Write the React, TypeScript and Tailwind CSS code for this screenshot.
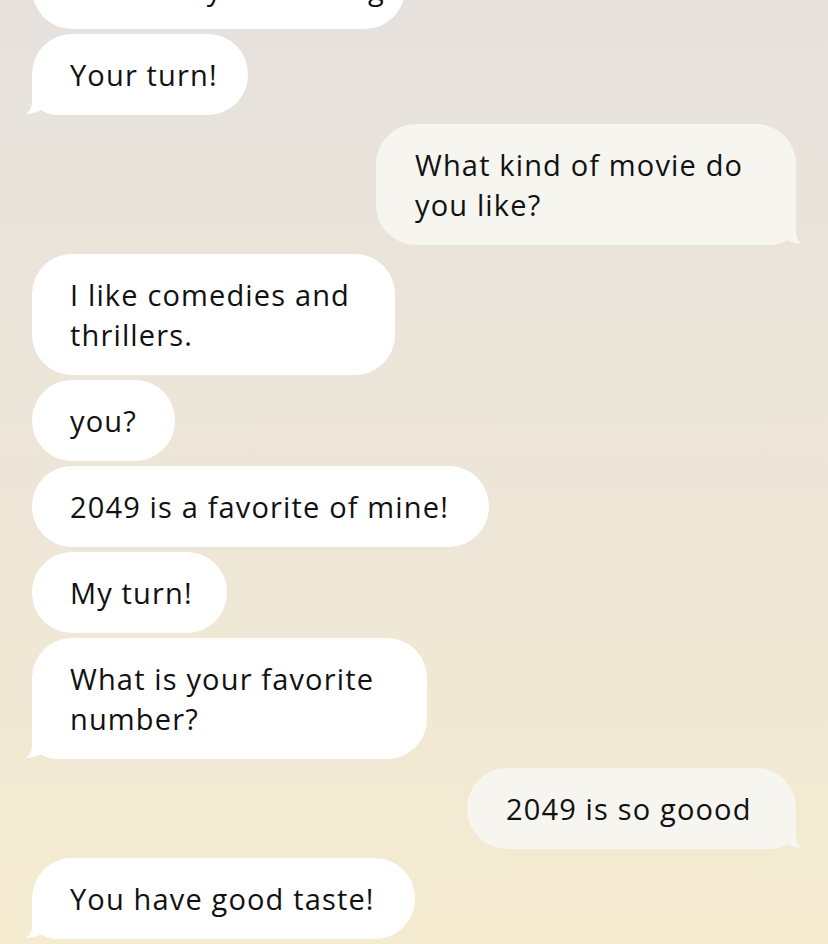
import React from "react";

type Msg = {
  side: "left" | "right";
  lines: string[];
  w: string;
  tail?: boolean;
  gap: string;
};

function Tail({ side, color }: { side: "left" | "right"; color: string }) {
  return (
    <svg
      viewBox="-6 -30 32 30"
      className={
        side === "left"
          ? "absolute bottom-0 left-[-6px] h-[30px] w-[32px]"
          : "absolute bottom-0 right-[-6px] h-[30px] w-[32px] -scale-x-100"
      }
    >
      <path
        d="M0 -30 L0 -14 C0 -8 -2 -4 -6 -1 C0 -1 8 -4 14 -7 C17 -3 20 -1 26 0 L26 -30 Z"
        fill={color}
      />
    </svg>
  );
}

function Bubble({ m }: { m: Msg }) {
  const left = m.side === "left";
  const color = left ? "#ffffff" : "#f7f5f0";
  return (
    <div
      className={`flex ${left ? "justify-start" : "justify-end"} ${m.gap}`}
    >
      <div
        className={`relative ${m.w} rounded-[40px] ${
          left ? "bg-white pl-[38px]" : "bg-[#f7f5f0] pl-[39px]"
        } ${m.tail ? (left ? "rounded-bl-[24px]" : "rounded-br-[24px]") : ""} py-[20.5px] text-[29px] leading-[40px] tracking-[1.15px] text-[#111111] whitespace-nowrap`}
      >
        {m.tail && <Tail side={m.side} color={color} />}
        <div className="relative">
          {m.lines.map((l, i) => (
            <div key={i}>{l}</div>
          ))}
        </div>
      </div>
    </div>
  );
}

const msgs: Msg[] = [
  { side: "left", lines: ["Absolutely something"], w: "w-[373px]", gap: "mt-[-52px]" },
  { side: "left", lines: ["Your turn!"], w: "w-[216px]", tail: true, gap: "mt-[5px]" },
  { side: "right", lines: ["What kind of movie do", "you like?"], w: "w-[420px]", tail: true, gap: "mt-[9px]" },
  { side: "left", lines: ["I like comedies and", "thrillers."], w: "w-[363px]", gap: "mt-[9px]" },
  { side: "left", lines: ["you?"], w: "w-[143px]", gap: "mt-[5px]" },
  { side: "left", lines: ["2049 is a favorite of mine!"], w: "w-[457px]", gap: "mt-[5px]" },
  { side: "left", lines: ["My turn!"], w: "w-[195px]", gap: "mt-[5px]" },
  { side: "left", lines: ["What is your favorite", "number?"], w: "w-[395px]", tail: true, gap: "mt-[5px]" },
  { side: "right", lines: ["2049 is so goood"], w: "w-[329px]", tail: true, gap: "mt-[9px]" },
  { side: "left", lines: ["You have good taste!"], w: "w-[383px]", tail: true, gap: "mt-[9px]" },
];

export default function App() {
  return (
    <div
      className="h-[944px] w-[828px] overflow-hidden bg-gradient-to-b from-[#e6e1dd] via-[#ede6d8] to-[#f4ebd0] px-[32px]"
      style={{ fontFamily: "'Open Sans', 'Noto Sans', sans-serif" }}
    >
      <div className="flex flex-col">
        {msgs.map((m, i) => (
          <Bubble key={i} m={m} />
        ))}
      </div>
    </div>
  );
}
